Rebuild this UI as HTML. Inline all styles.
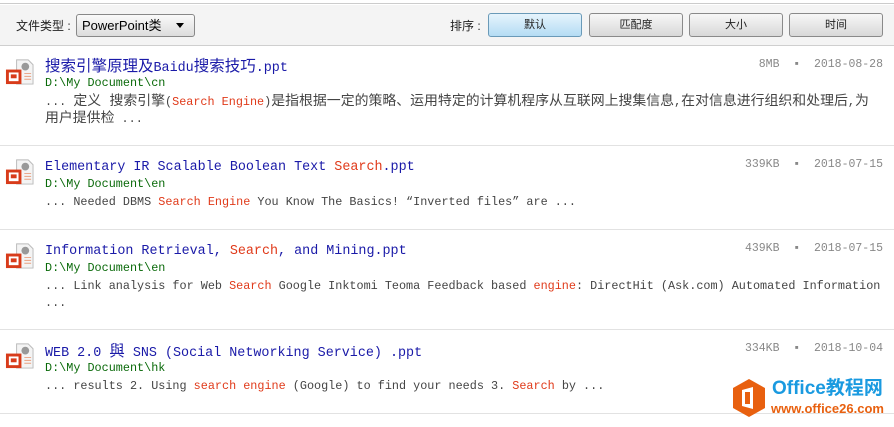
<!DOCTYPE html>
<html><head><meta charset="utf-8"><style>
*{margin:0;padding:0;box-sizing:border-box}
body{width:894px;height:427px;background:#fff;position:relative;overflow:hidden;font-family:"Liberation Sans","Noto Sans CJK SC",sans-serif}
.top{position:absolute;left:0;top:0;width:894px;height:4px;background:#fff;border-bottom:1px solid #ccc}
.bar{position:absolute;left:0;top:5px;width:894px;height:41px;background:#f4f4f4;border-bottom:1px solid #cfcfcf}
.lbl{position:absolute;top:12px;font-size:12px;color:#222}
.sel{position:absolute;left:76px;top:9px;width:119px;height:23px;border:1px solid #888;border-radius:3px;background:linear-gradient(#fafafa,#dcdcdc);font-size:13px;line-height:21px;padding:0 0 0 5px;color:#000;white-space:nowrap}
.sel:after{content:"";position:absolute;right:10px;top:8px;border:4px solid transparent;border-top:5px solid #000}
.btn{position:absolute;top:8px;height:24px;width:94px;border:1px solid #8a8a8a;border-radius:3px;background:linear-gradient(#f7f7f7,#d8d8d8);font-size:11px;text-align:center;line-height:22px;color:#222}
.btn.on{background:linear-gradient(#e6f4fc,#b4dcf4);border-color:#6a9ab8}
.item{position:absolute;left:0;width:894px;border-bottom:1px solid #e2e2e2}
.mono{font-family:"Liberation Mono","Noto Sans CJK SC",monospace;position:absolute;white-space:nowrap}
.t{left:45px;font-size:13.4px;line-height:16px;color:#1a1aa8}
.t .c{font-size:15.5px;line-height:16px}
.p{left:45px;font-size:11.8px;line-height:16px;color:#0a6a0a}
.s{left:45px;font-size:11.8px;color:#444;line-height:17px}
.s .c{font-size:13.9px;line-height:17px}
.r{color:#e03a1a}
.m{right:11px;font-size:11.5px;line-height:16px;color:#888}
.ic{position:absolute;left:5px;width:29px;height:29px}
</style></head><body>
<div class="top"></div>
<div class="bar">
<div class="lbl" style="left:16px">文件类型 :</div>
<div class="sel">PowerPoint类</div>
<div class="lbl" style="left:450px">排序 :</div>
<div class="btn on" style="left:488px">默认</div>
<div class="btn" style="left:589px">匹配度</div>
<div class="btn" style="left:689px">大小</div>
<div class="btn" style="left:789px">时间</div>
</div>

<svg width="0" height="0" style="position:absolute"><defs><g id="ppt"><path d="M12 3h12l5 5v20H12z" fill="#f4f4f4" stroke="#bbb"/><circle cx="21" cy="10" r="4" fill="#999"/><path d="M20 17h7M20 20h7M20 23h7" stroke="#e8a080"/><rect x="1" y="13" width="16" height="15" fill="#d83b1a"/><rect x="4" y="16" width="10" height="9" fill="#fff"/><rect x="6" y="18" width="6" height="4" fill="#d83b1a"/></g></defs></svg>

<div class="item" style="top:46px;height:100px">
<svg class="ic" style="top:11px" viewBox="0 0 30 30"><use href="#ppt"/></svg>
<div class="mono t" style="top:13px"><span class="c">搜索引擎原理及</span>Baidu<span class="c">搜索技巧</span>.ppt</div>
<div class="mono p" style="top:29px">D:\My Document\cn</div>
<div class="mono s" style="top:48px">... <span class="c">定义 搜索引擎</span>(<span class="r">Search Engine</span>)<span class="c">是指根据一定的策略、运用特定的计算机程序从互联网上搜集信息</span>,<span class="c">在对信息进行组织和处理后</span>,<span class="c">为</span><br><span class="c">用户提供检</span> ...</div>
<div class="mono m" style="top:11px">8MB &nbsp;▪&nbsp; 2018-08-28</div>
</div>

<div class="item" style="top:146px;height:84px">
<svg class="ic" style="top:11px" viewBox="0 0 30 30"><use href="#ppt"/></svg>
<div class="mono t" style="top:14px">Elementary IR Scalable Boolean Text <span class="r">Search</span>.ppt</div>
<div class="mono p" style="top:30px">D:\My Document\en</div>
<div class="mono s" style="top:48px">... Needed DBMS <span class="r">Search Engine</span> You Know The Basics! “Inverted files” are ...</div>
<div class="mono m" style="top:11px">339KB &nbsp;▪&nbsp; 2018-07-15</div>
</div>

<div class="item" style="top:230px;height:100px">
<svg class="ic" style="top:11px" viewBox="0 0 30 30"><use href="#ppt"/></svg>
<div class="mono t" style="top:14px">Information Retrieval, <span class="r">Search</span>, and Mining.ppt</div>
<div class="mono p" style="top:30px">D:\My Document\en</div>
<div class="mono s" style="top:48px">... Link analysis for Web <span class="r">Search</span> Google Inktomi Teoma Feedback based <span class="r">engine</span>: DirectHit (Ask.com) Automated Information<br>...</div>
<div class="mono m" style="top:11px">439KB &nbsp;▪&nbsp; 2018-07-15</div>
</div>

<div class="item" style="top:330px;height:84px">
<svg class="ic" style="top:11px" viewBox="0 0 30 30"><use href="#ppt"/></svg>
<div class="mono t" style="top:14px">WEB 2.0 <span class="c">與</span> SNS (Social Networking Service) .ppt</div>
<div class="mono p" style="top:30px">D:\My Document\hk</div>
<div class="mono s" style="top:48px">... results 2. Using <span class="r">search engine</span> (Google) to find your needs 3. <span class="r">Search</span> by ...</div>
<div class="mono m" style="top:11px">334KB &nbsp;▪&nbsp; 2018-10-04</div>
</div>

<svg style="position:absolute;left:731px;top:378px" width="36" height="40" viewBox="0 0 36 40"><path d="M18 1L34 10V30L18 39L2 30V10Z" fill="#e8600f"/><path d="M11 12L22 9V31L11 28Z" fill="#fff"/><rect x="14" y="14" width="5" height="12" fill="#e8600f"/></svg>
<div style="position:absolute;left:772px;top:379px;font-size:19px;font-weight:bold;color:#1a9ae0;line-height:20px;white-space:nowrap;font-family:'Liberation Sans','Noto Sans CJK SC',sans-serif">Office教程网</div>
<div style="position:absolute;left:771px;top:401px;font-size:13px;font-weight:bold;color:#e8600f;line-height:16px;white-space:nowrap">www.office26.com</div>
</body></html>
